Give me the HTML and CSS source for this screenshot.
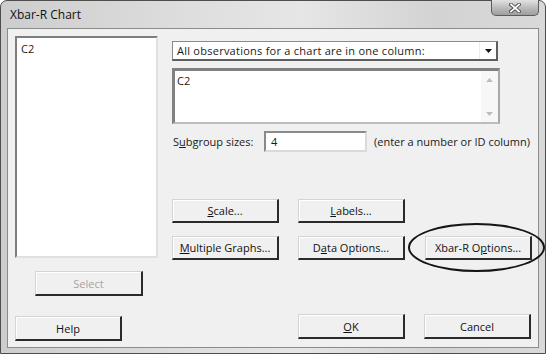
FILE: index.html
```html
<!DOCTYPE html>
<html lang="en">
  <head>
    <meta charset="UTF-8" />
    <title>Xbar-R Chart</title>
    <link rel="stylesheet" href="styles.css">
  </head>
  <body>
    <div class="window">
      <!-- Title bar -->
      <div class="titlebar">
        <span class="title">Xbar-R Chart</span>
        <div class="close-btn">
          <svg width="12" height="10" viewBox="0 0 12 10">
            <path d="M2 1.5 L10 8.5 M10 1.5 L2 8.5" stroke="#4a4a4a" stroke-width="3.6" stroke-linecap="square" />
            <path d="M2 1.5 L10 8.5 M10 1.5 L2 8.5" stroke="#ffffff" stroke-width="1.8" stroke-linecap="square" />
          </svg>
        </div>
      </div>

      <div class="client">
        <!-- Left: column list -->
        <div class="left-col">
          <div class="list">C2</div>
          <div class="btn btn-select disabled">Select</div>
          <div class="btn btn-help">Help</div>
        </div>

        <!-- Right: options -->
        <div class="right-col">
          <div class="combo">
            <span class="combo-text">All observations for a chart are in one column:</span>
            <span class="combo-arrow">
              <svg width="7" height="4" viewBox="0 0 7 4"><path d="M0 0 H7 L3.5 4 Z" fill="#111" /></svg>
            </span>
          </div>

          <div class="memo">
            <span class="memo-text">C2</span>
            <div class="scrollbar">
              <svg width="7" height="4" viewBox="0 0 7 4"><path d="M0 4 H7 L3.5 0 Z" fill="#bdbdbd" /></svg>
              <svg width="7" height="4" viewBox="0 0 7 4"><path d="M0 0 H7 L3.5 4 Z" fill="#bdbdbd" /></svg>
            </div>
          </div>

          <div class="subgroup">
            <span class="subgroup-label">S<u>u</u>bgroup sizes:</span>
            <div class="field">4</div>
            <span class="hint">(enter a number or ID column)</span>
          </div>

          <div class="btn-grid">
            <div class="btn"><u>S</u>cale...</div>
            <div class="btn"><u>L</u>abels...</div>
            <div></div>
            <div class="btn"><u>M</u>ultiple Graphs...</div>
            <div class="btn">D<u>a</u>ta Options...</div>
            <div class="btn circled">Xbar-R O<u>p</u>tions...</div>
          </div>

          <div class="bottom-row">
            <div class="btn btn-bottom"><u>O</u>K</div>
            <div class="btn btn-bottom">Cancel</div>
          </div>
        </div>
      </div>
    </div>
  </body>
</html>
```

FILE: styles.css
```css
body {
  margin: 0;
  background: #ffffff;
  font-family: "Open Sans", "Noto Sans", sans-serif;
  font-size: 11px;
  color: #1a1a1a;
}

.window {
  width: 546px;
  height: 354px;
  box-sizing: border-box;
  border: 1px solid #4e4e4e;
  border-radius: 7px 7px 0 0;
  background: linear-gradient(90deg, #cdcdcd, #dedede 35%, #e6e6e6 55%, #d3d3d3 80%, #d9d9d9);
  padding: 0 6px 5px 6px;
  display: flex;
  flex-direction: column;
}

/* Title bar */
.titlebar {
  height: 27px;
  display: flex;
  align-items: center;
  justify-content: space-between;
  padding-left: 3px;
}

.title {
  font-size: 12px;
  color: #111;
}

.close-btn {
  align-self: flex-start;
  margin-top: -1px;
  width: 48px;
  height: 16px;
  box-sizing: border-box;
  border: 1px solid #5c5c5c;
  border-top: none;
  border-radius: 0 0 5px 5px;
  background: linear-gradient(#e2e2e2, #bcbcbc 50%, #9f9f9f);
  display: flex;
  align-items: center;
  justify-content: center;
}

/* Client area */
.client {
  flex: 1;
  border: 1px solid #8c8c8c;
  background: #f0f0f0;
  display: grid;
  grid-template-columns: 143px 1fr;
  column-gap: 14px;
  padding: 7px 0 0 7px;
}

.left-col {
  display: flex;
  flex-direction: column;
  align-items: flex-start;
}

.list {
  width: 143px;
  height: 222px;
  box-sizing: border-box;
  background: #fff;
  border: 2px solid;
  border-color: #7e7e7e #e0e0e0 #e0e0e0 #7e7e7e;
  padding: 4px 4px;
  line-height: 14px;
}

/* Buttons */
.btn {
  box-sizing: border-box;
  height: 24px;
  width: 107px;
  background: #f0f0f0;
  border: 1px solid;
  border-color: #d4d4d4 #2a2a2a #2a2a2a #d4d4d4;
  border-right-width: 2px;
  border-bottom-width: 2px;
  box-shadow: inset 1px 1px 0 #ffffff;
  display: flex;
  align-items: center;
  justify-content: center;
  color: #111;
  white-space: nowrap;
}

.btn-select {
  margin: 13px 0 0 20px;
  width: 108px;
  height: 25px;
}

.btn.disabled {
  color: #a4a4a4;
}

.btn-help {
  margin-top: 20px;
  height: 25px;
}

.right-col {
  display: flex;
  flex-direction: column;
  align-items: flex-start;
}

.combo {
  margin-top: 5px;
  width: 326px;
  height: 20px;
  box-sizing: border-box;
  background: #fff;
  border: 1px solid;
  border-color: #8a8a8a #5e5e5e #5e5e5e #8a8a8a;
  border-right-width: 2px;
  border-bottom-width: 2px;
  display: flex;
  align-items: center;
}

.combo-text {
  flex: 1;
  padding-left: 4px;
  letter-spacing: 0.25px;
}

.combo-arrow {
  width: 16px;
  height: 100%;
  display: flex;
  align-items: center;
  justify-content: center;
  border-left: 1px solid #ececec;
}

.memo {
  margin-top: 7px;
  width: 328px;
  height: 56px;
  box-sizing: border-box;
  background: #fff;
  border: 3px solid;
  border-color: #808080 #a8a8a8 #bdbdbd #808080;
  border-right-width: 2px;
  border-bottom-width: 2px;
  display: flex;
}

.memo-text {
  flex: 1;
  padding: 2px 0 0 2px;
}

.scrollbar {
  width: 17px;
  background: #f7f7f7;
  display: flex;
  flex-direction: column;
  justify-content: space-between;
  align-items: center;
  padding: 7px 0 6px;
}

.subgroup {
  margin-top: 7px;
  display: flex;
  align-items: center;
}

.subgroup-label {
  width: 92px;
  padding-left: 1px;
  box-sizing: border-box;
}

.field {
  width: 103px;
  height: 21px;
  box-sizing: border-box;
  background: #fff;
  border: 2px solid;
  border-color: #8a8a8a #dadada #dadada #8a8a8a;
  padding: 1px 0 0 5px;
  line-height: 15px;
}

.hint {
  margin-left: 7px;
}

.btn-grid {
  margin-top: 47px;
  display: grid;
  grid-template-columns: 107px 107px 107px;
  column-gap: 19px;
  row-gap: 13px;
}

.circled {
  position: relative;
  margin-left: 1px;
}

/* Hand-drawn ellipse around the options button */
.circled::after {
  content: "";
  position: absolute;
  left: -18px;
  top: -14px;
  width: 133px;
  height: 45px;
  border: 2px solid #151515;
  border-radius: 50%;
  pointer-events: none;
}

.bottom-row {
  margin: 54px 0 0 126px;
  display: flex;
  gap: 19px;
}

.btn-bottom {
  height: 25px;
}
```
